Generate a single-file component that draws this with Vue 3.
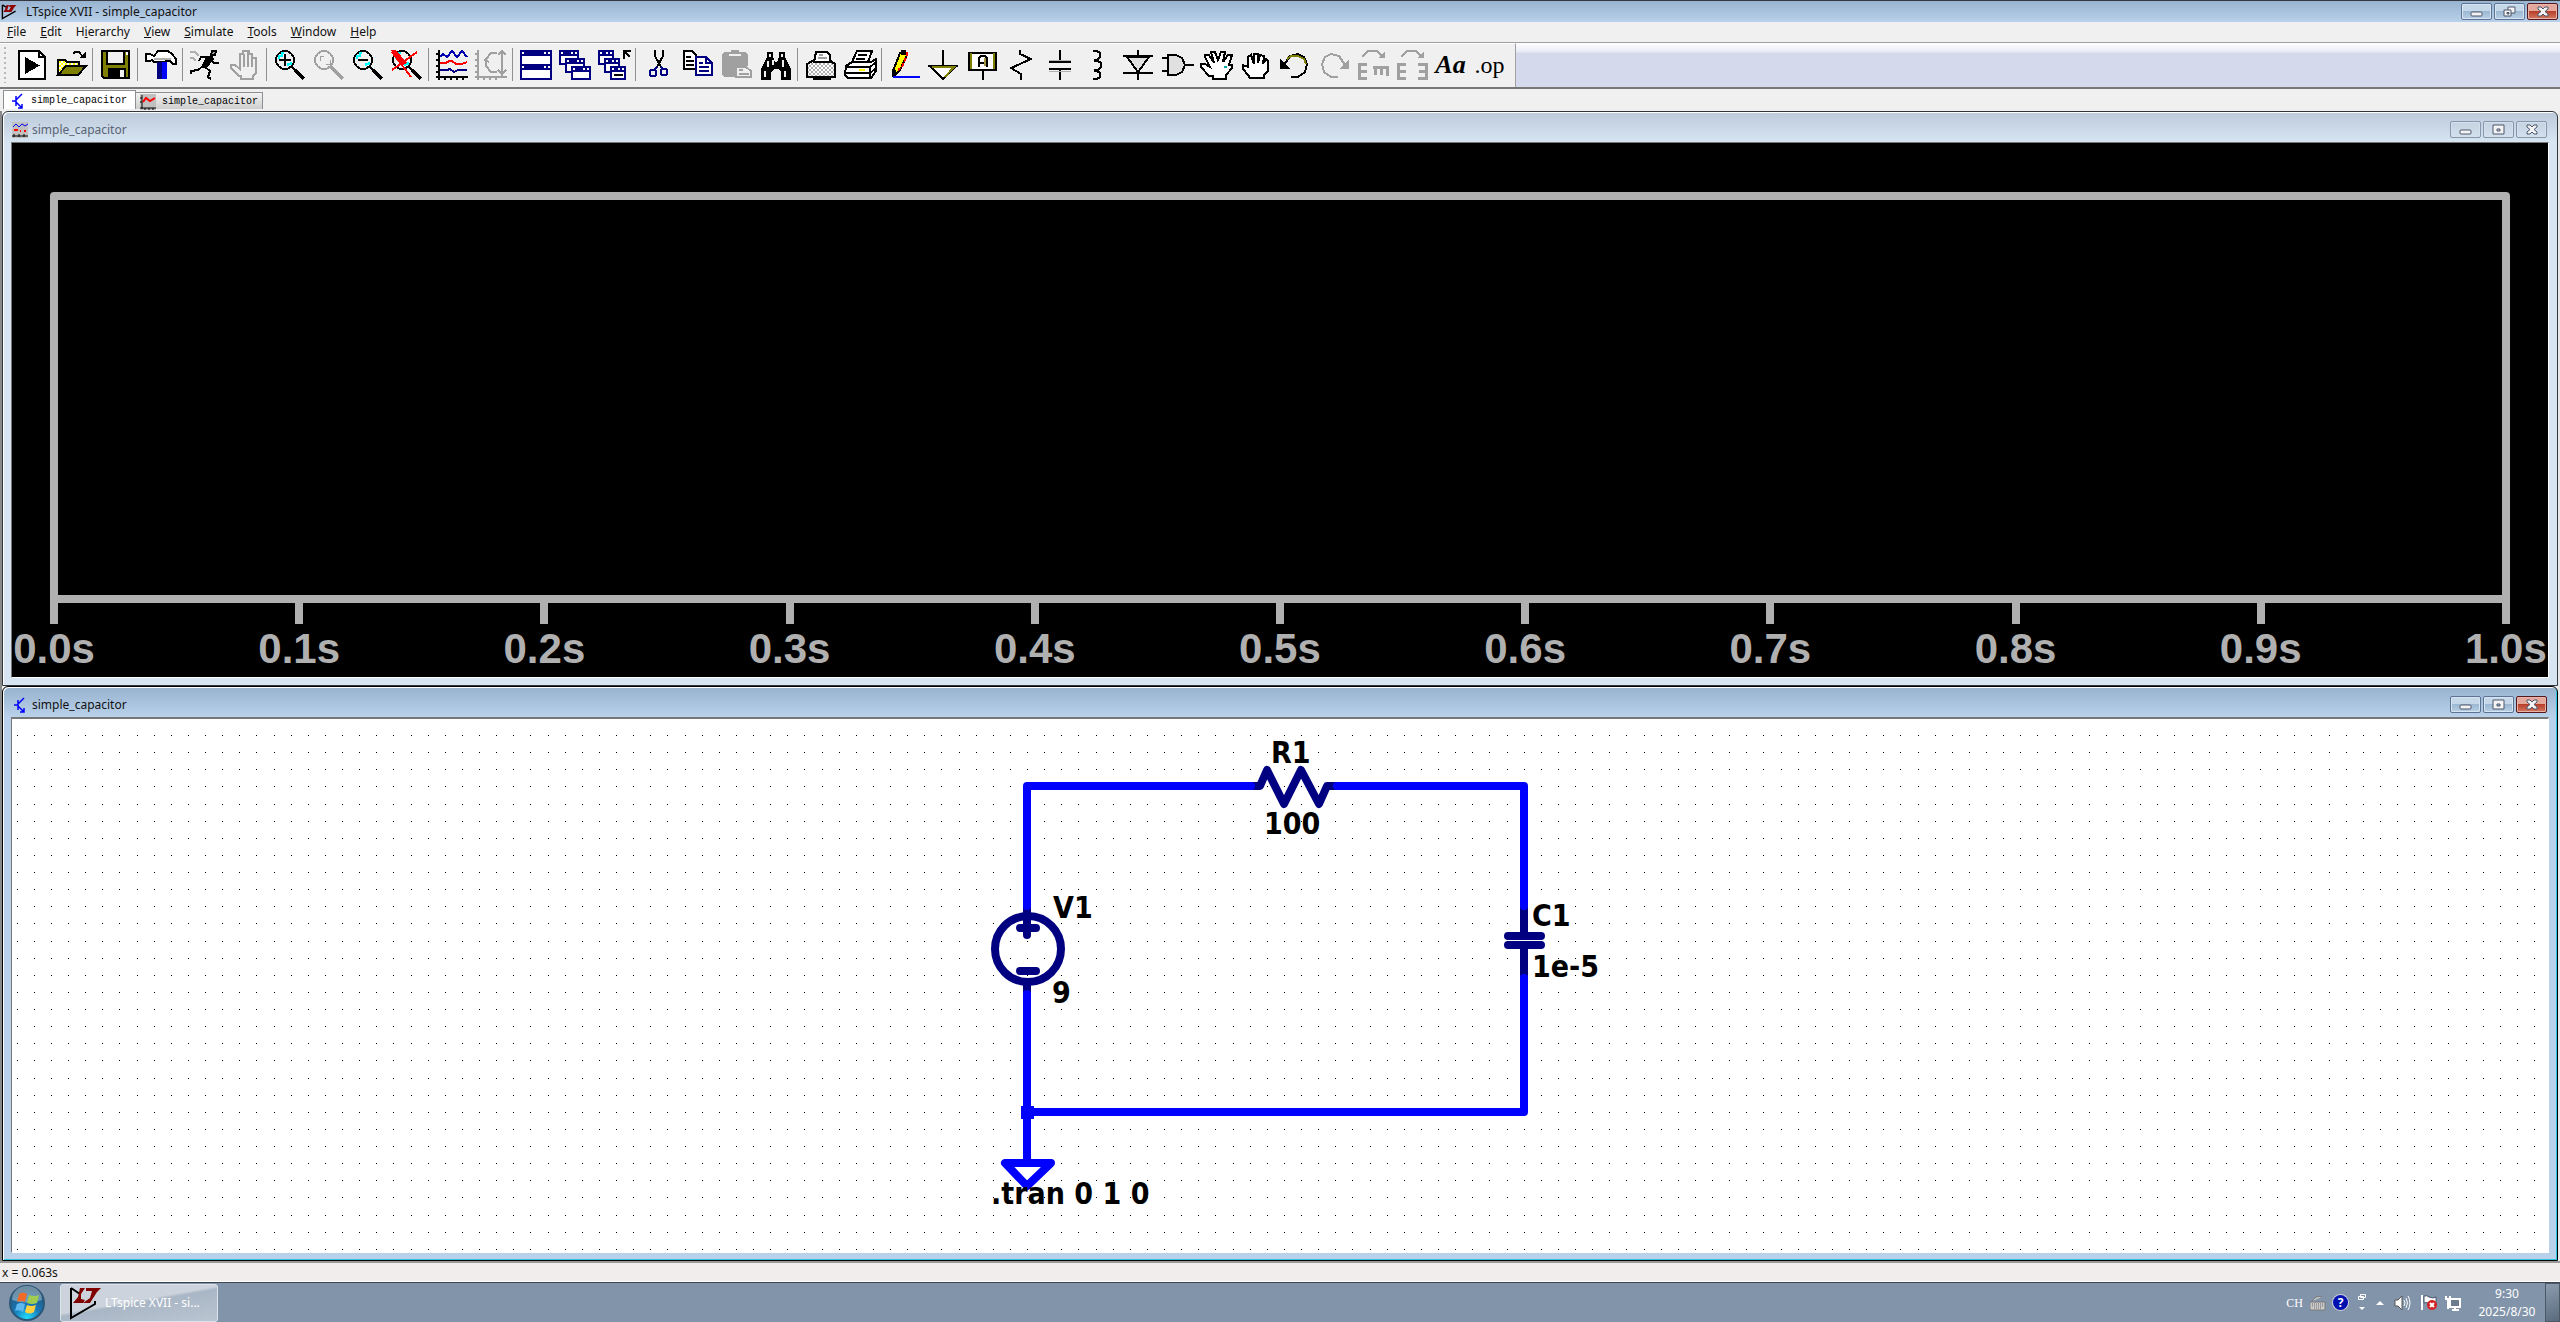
<script setup>
const menus = [
  ['', 'F', 'ile'], ['', 'E', 'dit'], ['H', 'i', 'erarchy'], ['', 'V', 'iew'],
  ['', 'S', 'imulate'], ['', 'T', 'ools'], ['', 'W', 'indow'], ['', 'H', 'elp'],
]

const lens = '<circle cx="11" cy="11" r="9" fill="#f0f0f0" stroke="#000" stroke-width="2"/><path d="M5 10V7H8V4H10M17 13V15H14V17" stroke="#0ff" stroke-width="2" fill="none"/><path d="M18 18L22 22" stroke="#000" stroke-width="2"/><path d="M21 21L30 30" stroke="#000" stroke-width="4"/>'
const win = (x, y, w, h) => `<path d="M${x} ${y}h${w}v${h}h-${w}z" fill="#000080"/><path d="M${x + 2} ${y + 6}h${w - 4}v${h - 8}h-${w - 4}z" fill="#fff"/><path d="M${x + 2} ${y + 2}h2v2h-2zM${x + w - 4} ${y + 2}h2v2h-2zM${x + w - 8} ${y + 2}h2v2h-2z" fill="#fff"/>`
const groups = [
  [
    { name: 'Run file', art: '<path d="M3 2H23L29 8V30H3Z" fill="#fff" stroke="#000" stroke-width="2"/><path d="M23 2V8H29" fill="none" stroke="#000" stroke-width="2"/><path d="M9 8L24 16.500L9 25Z" fill="#000"/>' },
    { name: 'Open', art: '<path d="M3 25V11H10L12 13H24V17" fill="url(#yellowDots)" stroke="#000" stroke-width="2"/><path d="M3 26L11 17H31L23 26Z" fill="#808000" stroke="#000" stroke-width="2"/><path d="M18 5L20 3H24L28 8" fill="none" stroke="#000" stroke-width="2"/><path d="M24 9H31V3Z" fill="#000"/>' },
  ],
  [{ name: 'Save', art: '<path d="M2 2H29V29H4L2 27Z" fill="#808000" stroke="#000" stroke-width="2"/><path d="M7 2H24V15H7Z" fill="#f0f0f0" stroke="#000" stroke-width="2"/><path d="M26 3h2v3h-2z" fill="#fff"/><path d="M8 19H26V29H8Z" fill="#000"/><path d="M20 21h4v7h-4z" fill="#f0f0f0"/>' }],
  [{ name: 'Control panel', art: '<path d="M1 5H5L9 7L13 2H23L27 5L31 10V15H28L25 12H21V13H9L7 11L5 12H1Z" fill="#fff" stroke="#000" stroke-width="2"/><path d="M9 10H26" stroke="#b0b0b0" stroke-width="2"/><path d="M12 13h5v17h-5z" fill="#000080"/><path d="M17 13h5v17h-5z" fill="#00f"/>' }],
  [
    { name: 'Run', art: '<path d="M22 2H26L25 6H21Z" fill="#aaa" stroke="#000" stroke-width="2"/><path d="M16 7H23L24 10L20 15L16 20L11 18L14 12Z"/><path d="M9 12L11 8H17M21 10L24 14H29M13 17L8 21L1 22V25M15 18L20 22L18 28L21 30" fill="none" stroke="#000" stroke-width="2"/><path d="M0 3H5L9 7M0 9H3L6 12" fill="none" stroke="#b0b0b0" stroke-width="2"/>' },
    { name: 'Halt', art: '<path d="M10 27L2 19V16H6L11 20V5H14V2H20V5H23V9H27V24L24 27V30H12V27Z" fill="#f0f0f0" stroke="#a0a0a0" stroke-width="2"/><path d="M15 5V18M19 3V18M23 6V18" stroke="#a0a0a0" stroke-width="2"/>' },
  ],
  [
    { name: 'Zoom in', art: lens + '<path d="M5 11H17M11 5V17" stroke="#000" stroke-width="2"/>' },
    { name: 'Pan', art: '<circle cx="11" cy="11" r="9" fill="none" stroke="#a0a0a0" stroke-width="2"/><path d="M7 12V7H11M17 11V15H13" stroke="#a0a0a0" fill="none"/><path d="M18 18L30 30" stroke="#a0a0a0" stroke-width="4"/>' },
    { name: 'Zoom out', art: lens + '<path d="M6 11H16" stroke="#000" stroke-width="2"/>' },
    { name: 'Zoom full', art: lens + '<path d="M1 3L20 28M26 3L1 21" stroke="#f00" stroke-width="2"/><path d="M0 1H5L16 14L12 16Z" fill="#f00"/>' },
  ],
  [
    { name: 'Autorange', art: '<path d="M3 1V31M0 28H32M0 5H3M0 11H3M0 17H3M0 23H3M9 28V31M15 28V31M21 28V31M27 28V31" stroke="#000" stroke-width="2" fill="none"/><path d="M4 8L7 5L11 8L16 2L21 8L26 2L31 8" fill="none" stroke="#0000b0" stroke-width="2"/><path d="M4 14H10L13 12H16L20 15H26L31 13" fill="none" stroke="#f00" stroke-width="2"/><path d="M4 21H11L14 20L18 23L22 21H31" fill="none" stroke="#000080" stroke-width="2"/>' },
    { name: 'Plot settings', art: '<path d="M3 1V31M0 28H32M0 5H3M0 11H3M0 17H3M0 23H3M9 28V31M15 28V31M21 28V31M27 2V27M23 6L27 2L31 6M23 21L27 25L31 21M22 4H16L11 10V17L16 23H22M9 11L14 13" stroke="#a0a0a0" stroke-width="2" fill="none"/>' },
  ],
  [
    { name: 'Tile windows', art: win(0, 1, 32, 16) + win(0, 15, 32, 16) },
    { name: 'Cascade windows', art: win(0, 1, 20, 15) + win(6, 9, 20, 15) + win(12, 17, 20, 14) },
    { name: 'Close windows', art: win(0, 1, 16, 15) + win(6, 9, 16, 15) + win(12, 17, 16, 14) + '<path d="M26 10V2H33M26 2L32 8M16 26H25" fill="none" stroke="#000" stroke-width="2"/>' },
  ],
  [
    { name: 'Cut', art: '<path d="M12 1V7L18 18M20 1V7L14 18" fill="none" stroke="#000" stroke-width="2"/><circle cx="10" cy="24" r="3.500" fill="none" stroke="#000080" stroke-width="2"/><circle cx="21" cy="23" r="3.500" fill="none" stroke="#000080" stroke-width="2"/><path d="M14 18L11 21M18 18L20 20" stroke="#000080" stroke-width="2"/>' },
    { name: 'Copy', art: '<path d="M2 2H10L14 6V20H2Z" fill="#fff" stroke="#000" stroke-width="2"/><path d="M4 8H9M4 12H12M4 16H12" stroke="#000" stroke-width="2"/><path d="M14 8H24L30 14V26H14Z" fill="#fff" stroke="#000080" stroke-width="2"/><path d="M24 8V14H30M17 14H21M17 18H27M17 22H27" fill="none" stroke="#000080" stroke-width="2"/>' },
    { name: 'Paste', art: '<path d="M1 5L3 3H10V1H18V3H24L27 5V17H14V28H3L1 26Z" fill="#a0a0a0"/><path d="M8 6H20" stroke="#f0f0f0" stroke-width="2"/><path d="M15 18H25L30 22V28H15Z" fill="#f0f0f0" stroke="#a0a0a0" stroke-width="2"/><path d="M18 21H22M18 25H28" stroke="#a0a0a0" stroke-width="2"/>' },
    { name: 'Find', art: '<path d="M7 3H13V8L15 13H17L19 8V3H25V8L31 20V31H21V23L18 20H14L11 23V31H1V20L7 8Z"/><path d="M9 5h2v3h-2zM21 5h2v3h-2zM7 12h2v6h-2zM12 11h2v5h-2zM22 11h2v7h-2zM4 22h2v6h-2zM24 22h2v6h-2z" fill="#f0f0f0"/>' },
  ],
  [
    { name: 'Print setup', art: '<path d="M2 15L9 11H24L30 15V28H2Z" fill="url(#grayDots)" stroke="#000" stroke-width="2"/><path d="M9 13L11 3H22L25 6V13Z" fill="#fff" stroke="#000" stroke-width="2"/><path d="M14 6H18M13 9H22" stroke="#a0a0a0" stroke-width="2"/><path d="M8 28h18v3h-18z"/>' },
    { name: 'Print', art: '<path d="M8 13L13 2H28L24 13Z" fill="#fff" stroke="#000" stroke-width="2"/><path d="M14 6H23M12 10H21" stroke="#000" stroke-width="2"/><path d="M2 17L8 13H27L32 10V22L27 29H4L1 26Z" fill="#fff" stroke="#000" stroke-width="2"/><path d="M2 18H26L31 14M2 24H26L31 20M26 18V28" stroke="#000" stroke-width="2" fill="none"/><path d="M15 20h6v2h-6z" fill="#ff0"/>' },
  ],
  [
    { name: 'Wire', art: '<path d="M4 22L11 4L16 2L18 6L11 21L5 27Z" fill="#ff0" stroke="#000" stroke-width="2"/><path d="M12 1h5v5h-5zM3 21h4v7h-4z"/><path d="M18 3V6L13 18L9 21" fill="none" stroke="#f00" stroke-width="2" stroke-dasharray="4 2"/><path d="M4 28H31" stroke="#00f" stroke-width="2"/>' },
    { name: 'Ground', art: '<path d="M15 1V17M0 17H30" stroke="#000" stroke-width="2"/><path d="M3 18L15 30L27 18Z" fill="#fff" stroke="#000" stroke-width="2"/><path d="M4 18H26L17 28" fill="none" stroke="#808000" stroke-width="2"/>' },
    { name: 'Label net', art: '<path d="M2 4H29V21H2Z" fill="#fff" stroke="#000" stroke-width="2"/><path d="M4 4V20M27 4V20" stroke="#808000" stroke-width="2"/><path d="M12 18V9L14 7H18L20 9V18M12 14H20M16 22V31" fill="none" stroke="#000" stroke-width="2"/><path d="M18 9V17" stroke="#a09840" stroke-width="2"/>' },
    { name: 'Resistor', art: '<path d="M14 1V5L25 10L5 19L15 25V31" fill="none" stroke="#000" stroke-width="2"/>' },
    { name: 'Capacitor', art: '<path d="M15 1V13M15 20V31M4 13H26M4 20H26" stroke="#000" stroke-width="2"/><path d="M4 11H26M4 22H26" stroke="#b0b0b0"/>' },
    { name: 'Inductor', art: '<path d="M9 2H13L16 4V8L13 11H10M10 12H14L17 14V18L14 21H10M10 22H13L16 24V28L13 30H9" fill="none" stroke="#000" stroke-width="2"/>' },
    { name: 'Diode', art: '<path d="M0 7H30M0 24H30M15 1V7M15 24V31" stroke="#000" stroke-width="2"/><path d="M4 8H26L15 23Z" fill="#e0e0e0" stroke="#000" stroke-width="2"/>' },
    { name: 'Component', art: '<path d="M6 6H14L20 9L23 16L20 23L14 26H6Z" fill="#e0e0e0" stroke="#000" stroke-width="2"/><path d="M0 9H6M0 22H6M23 16H32" stroke="#000" stroke-width="2"/>' },
    { name: 'Move', art: '<path d="M8 27L0 18V15H4L9 18L4 8V6H8L13 14L10 3H14L17 11L20 3H24L22 13L27 6H31L28 16H31V19L25 26V30H12V27Z" fill="#fff" stroke="#000" stroke-width="2"/><path d="M23 17h3v2h-3z" fill="#0aa"/>' },
    { name: 'Drag', art: '<path d="M8 26L3 20V16L8 18V8L11 6L14 15V5L18 5V14L20 6L24 7L23 15L26 10L28 12V22L24 26V29H10Z" fill="#fff" stroke="#000" stroke-width="2"/>' },
    { name: 'Undo', art: '<path d="M5 16L11 7L19 5L25 8L28 15L26 23L19 28H12" fill="none" stroke="#000" stroke-width="2"/><path d="M8 10L12 7H19L25 10L27 15" fill="none" stroke="#808000" stroke-width="2"/><path d="M1 10V20H11Z"/>' },
    { name: 'Redo', art: '<path d="M27 16L21 7L13 5L7 8L4 15L6 23L13 28H20" fill="none" stroke="#a0a0a0" stroke-width="2"/><path d="M31 10V20H21Z" fill="#a0a0a0"/>' },
    { name: 'Rotate', art: '<path d="M5 8L11 2H20L26 8" fill="none" stroke="#a0a0a0" stroke-width="2"/><path d="M28 2V9H21Z" fill="#a0a0a0"/><path d="M10 15H2V29H10M3 22H10M16 18H32M18 18V26M24 18V26M30 18V27" fill="none" stroke="#a0a0a0" stroke-width="3"/>' },
    { name: 'Mirror', art: '<path d="M5 8L11 2H20L26 8" fill="none" stroke="#a0a0a0" stroke-width="2"/><path d="M28 2V9H21Z" fill="#a0a0a0"/><path d="M10 15H2V29H10M3 22H10M22 15H30V29H22M23 22H30" fill="none" stroke="#a0a0a0" stroke-width="3"/>' },
    { name: 'Text', text: 'Aa', kind: 'script' },
    { name: 'SPICE directive', text: '.op', kind: 'serif' },
  ],
]

const ticks = ['0.0s', '0.1s', '0.2s', '0.3s', '0.4s', '0.5s', '0.6s', '0.7s', '0.8s', '0.9s', '1.0s']
const dotOffsets = [0, 17, 34, 51, 68, 85, 102, 119]

const glyphs = {
  Minimize: '<rect x="10" y="9" width="11" height="4" rx="1"/>',
  Maximize: '<path d="M10 4H21V13H10ZM14 8H17V10H14Z" fill-rule="evenodd"/>',
  Restore: '<path d="M14 4H21V10H14Z"/><path d="M10 7H17V13H10ZM13 9.500H15V11H13Z" fill-rule="evenodd"/>',
  Close: '<path d="M11 4H14L16 6L18 4H21V6L18 8.500L21 11V13H18L16 11L14 13H11V11L14 8.500L11 6Z"/>',
}
</script>

<template>
  <div class="desktop">
    <svg class="defs" aria-hidden="true">
      <defs>
        <pattern id="yellowDots" width="4" height="4" patternUnits="userSpaceOnUse">
          <path d="M0 0h4v4h-4z" fill="#fff" /><path d="M0 0h2v2h-2zM2 2h2v2h-2z" fill="#ff0" />
        </pattern>
        <pattern id="grayDots" width="4" height="4" patternUnits="userSpaceOnUse">
          <path d="M0 0h4v4h-4z" fill="#fff" /><path d="M0 0h2v2h-2zM2 2h2v2h-2z" fill="#b0b0b0" />
        </pattern>
      </defs>
    </svg>

    <header class="titlebar">
      <svg class="app-icon" width="16" height="16" viewBox="0 0 34 34" aria-hidden="true">
        <path d="M3 2V31L31 15M3 2L13 8" fill="none" stroke="#000" stroke-width="3" />
        <path d="M12 2H17L13 13H17L15 17H5L8 13ZM18 2H33L29 6L22 17H15L21 6H17Z" fill="#900000" />
      </svg>
      <h1>LTspice XVII - simple_capacitor</h1>
      <div class="controls">
        <button v-for="c in ['Minimize', 'Restore', 'Close']" :key="c" :aria-label="c" :class="{ close: c === 'Close' }">
          <svg viewBox="0 0 31 17" v-html="glyphs[c]"></svg>
        </button>
      </div>
    </header>

    <nav class="menubar">
      <button v-for="m in menus" :key="m.join('')">{{ m[0] }}<u>{{ m[1] }}</u>{{ m[2] }}</button>
    </nav>

    <div class="toolbar-row">
      <div class="toolbar" role="toolbar" aria-label="Main toolbar">
        <span class="grip"></span>
        <div v-for="(g, i) in groups" :key="i" class="group">
          <button v-for="t in g" :key="t.name" :aria-label="t.name">
            <span v-if="t.text" :class="t.kind">{{ t.text }}</span>
            <svg v-else viewBox="0 0 32 32" shape-rendering="crispEdges" v-html="t.art"></svg>
          </button>
        </div>
      </div>
    </div>

    <div class="tabs" role="tablist">
      <button class="tab active" role="tab" aria-selected="true">
        <svg viewBox="0 0 16 16" aria-hidden="true"><path d="M2 8H6M6 3V13M6 7L12 1M6 9L12 15M12 11V15H8" fill="none" stroke="#00f" stroke-width="1.500" /></svg>
        simple_capacitor
      </button>
      <button class="tab" role="tab" aria-selected="false">
        <svg viewBox="0 0 16 16" aria-hidden="true"><path d="M0 0H16V16H0Z" fill="#c0c0c0" /><path d="M2 1V15M0 14H16M0 4H2M0 8H2M5 14V16M9 14V16M13 14V16" stroke="#000" /><path d="M3 8L6 4L10 7L15 4" fill="none" stroke="#f00" stroke-width="2" /></svg>
        simple_capacitor
      </button>
    </div>

    <main class="mdi">
      <section class="child inactive">
        <header>
          <svg class="child-icon" viewBox="0 0 16 16" aria-hidden="true"><path d="M0 0H16V16H0Z" fill="#c0c0c0" /><path d="M1 5L4 2L7 5L10 2L13 4L16 2" fill="none" stroke="#00f" /><path d="M2 8H6M8 9H9M12 9H14" stroke="#f00" stroke-width="2" /><path d="M0 14H16M2 12V15M7 12V15M12 12V15" stroke="#000" /></svg>
          <h2>simple_capacitor</h2>
          <div class="controls">
            <button v-for="c in ['Minimize', 'Maximize', 'Close']" :key="c" :aria-label="c">
              <svg viewBox="0 0 31 17" v-html="glyphs[c]"></svg>
            </button>
          </div>
        </header>
        <div class="view plot">
          <div class="plot-frame"></div>
          <div class="axis">
            <span v-for="t in ticks" :key="t" class="tick"><b>{{ t }}</b></span>
          </div>
        </div>
      </section>

      <section class="child front">
        <header>
          <svg class="child-icon" viewBox="0 0 16 16" aria-hidden="true"><path d="M2 8H6M6 3V13M6 7L12 1M6 9L12 15M12 11V15H8" fill="none" stroke="#00f" stroke-width="1.500" /></svg>
          <h2>simple_capacitor</h2>
          <div class="controls">
            <button v-for="c in ['Minimize', 'Maximize', 'Close']" :key="c" :aria-label="c" :class="{ close: c === 'Close' }">
              <svg viewBox="0 0 31 17" v-html="glyphs[c]"></svg>
            </button>
          </div>
        </header>
        <div class="view sheet">
          <svg class="schematic" role="img" aria-label="RC circuit">
            <defs>
              <pattern id="grid" x="-12" y="85" width="137" height="137" patternUnits="userSpaceOnUse">
                <template v-for="y in dotOffsets" :key="y">
                  <rect v-for="x in dotOffsets" :key="x" :x="x" :y="y" width="1" height="1" fill="#000" />
                </template>
              </pattern>
            </defs>
            <rect width="100%" height="100%" fill="url(#grid)" />
            <svg x="50%" overflow="visible">
              <g class="symbol">
                <path d="M-27 67H-20L-13 51L4 85L21 51L39 85L47 67H55" />
                <circle cx="-252" cy="230" r="33" />
                <path d="M-253 189V216M-260 209H-244M-260 252H-244M-253 263V273" />
                <path d="M244 189V217M228 217H261M228 226H261M244 226V257" />
              </g>
              <g class="wire">
                <path d="M-253 187V67H-29" /><path d="M57 67H244V187" />
                <path d="M244 259V393H-253" /><path d="M-253 275V442" />
                <path d="M-275 444H-229L-253 467Z" />
              </g>
              <rect x="-259" y="387" width="13" height="13" fill="#00f" />
              <g class="note">
                <text x="-9" y="44">R1</text>
                <text x="-16" y="115">100</text>
                <text x="-227" y="199">V1</text>
                <text x="-228" y="284">9</text>
                <text x="252" y="207">C1</text>
                <text x="252" y="258">1e-5</text>
                <text x="-289" y="485">.tran 0 1 0</text>
              </g>
            </svg>
          </svg>
        </div>
      </section>
    </main>

    <div class="status">x = 0.063s</div>

    <footer class="taskbar">
      <button class="start" aria-label="Start">
        <svg viewBox="0 0 36 36">
          <defs>
            <radialGradient id="orb" cx="50%" cy="95%" r="90%">
              <stop offset="0" stop-color="#20e0ff" /><stop offset=".45" stop-color="#1878b8" /><stop offset="1" stop-color="#24506e" />
            </radialGradient>
          </defs>
          <circle cx="18" cy="18" r="17" fill="url(#orb)" stroke="#2c5878" stroke-width="2" />
          <path d="M3 15A15 14 0 0 1 33 15Q18 20 3 15Z" fill="#fff" opacity=".35" />
          <path d="M10 9Q14 6 18 9L16 17Q12 15 8 17Z" fill="#f06a28" />
          <path d="M20 10Q25 12 30 10L28 18Q23 20 18 18Z" fill="#a0cc50" />
          <path d="M8 19Q12 17 16 19L14 27Q10 24 6 26Z" fill="#60b8f0" />
          <path d="M18 20Q22 22 27 20L25 27Q20 30 16 27Z" fill="#ffd040" />
        </svg>
      </button>
      <button class="task">
        <svg width="34" height="34" viewBox="0 0 34 34" aria-hidden="true">
          <path d="M3 2V32L27 18V15M3 2L12 8" fill="none" stroke="#000" stroke-width="2" />
          <path d="M12 2H17L13 8V13L17 14L15 17H5L10 11ZM18 2H33L29 6L22 17H15L22 12L24 5H18Z" fill="#800000" />
        </svg>
        <span>LTspice XVII - si...</span>
      </button>
      <div class="tray">
        <span class="lang">CH</span>
        <svg width="16" height="16" viewBox="0 0 16 16" aria-hidden="true"><path d="M0 7H15V15H0ZM2 6Q6 0 12 2" fill="#ccc" stroke="#777" /><path d="M2 9H14M2 11H14M4 13H11" stroke="#666" stroke-dasharray="1 1" /></svg>
        <button class="help" aria-label="Help">?</button>
        <svg class="spaced" width="8" height="20" viewBox="0 0 8 20" aria-hidden="true"><path d="M2.500 1.500H7.500V4.500H2.500ZM.5 3.500H5.500V6.500H.5Z" fill="#8294aa" stroke="#fff" /><path d="M1 14H7L4 17Z" fill="#fff" /></svg>
        <svg width="8" height="6" viewBox="0 0 8 6" aria-hidden="true"><path d="M0 5L4 1L8 5Z" fill="#fff" /></svg>
        <svg class="spaced" width="17" height="16" viewBox="0 0 17 16" aria-hidden="true"><path d="M1 5H4L8 1V15L4 11H1Z" fill="#fff" stroke="#555" /><path d="M10 5Q12 8 10 11M12 3Q15 8 12 13M14 1Q18 8 14 15" fill="none" stroke="#fff" /></svg>
        <svg width="17" height="17" viewBox="0 0 17 17" aria-hidden="true"><path d="M1 1V16" stroke="#fff" stroke-width="2" /><path d="M3 2Q6 1 8 3Q12 5 15 3V10Q11 11 8 9Q5 8 3 9Z" fill="#fff" stroke="#4c566c" /><circle cx="11" cy="11" r="5" fill="#d42020" /><path d="M9 9L13 13M13 9L9 13" stroke="#fff" stroke-width="2" /></svg>
        <svg width="17" height="16" viewBox="0 0 17 16" aria-hidden="true"><path d="M5 4H15V12H5ZM7 15H14M10 12V15" fill="#6c7c8e" stroke="#fff" stroke-width="2" /><path d="M1 1V4H5V1M3 4V14" fill="none" stroke="#fff" stroke-width="2" /></svg>
        <time>9:30<br />2025/8/30</time>
      </div>
      <button class="show-desktop" aria-label="Show desktop"></button>
    </footer>
  </div>
</template>

<style>
body { margin: 0; }
</style>

<style scoped>
* { box-sizing: border-box; }
.desktop {
  display: flex;
  flex-direction: column;
  min-height: 100vh;
  background: #f0f0f0;
  color: #111;
  font: 12px/16px "Noto Sans", "Open Sans", sans-serif;
}
.defs { position: absolute; width: 0; height: 0; }
button { margin: 0; padding: 0; border: 0; background: none; color: inherit; font: inherit; }
h1, h2 { flex: 1; margin: 0; font-size: 12px; font-weight: 400; }

.titlebar {
  display: flex;
  align-items: center;
  height: 22px;
  padding: 0 2px 0 1px;
  border-top: 1px solid #35393f;
  background: linear-gradient(#98b3d0, #b9d1ea);
}
.titlebar h1 { padding-left: 9px; }
.controls { display: flex; gap: 2px; }
.controls button {
  width: 31px;
  height: 17px;
  border: 1px solid #5c7394;
  border-radius: 2px;
  background: linear-gradient(#c5d8ea 45%, #9db8d2 50%, #b7d0e6);
  box-shadow: inset 0 0 0 1px #d7e5f3;
}
.controls svg { display: block; width: 31px; height: 17px; margin: -1px; fill: #f4f4f4; stroke: #4c566c; stroke-width: 1px; }
.controls .close {
  border-color: #55181c;
  background: linear-gradient(#e4a79c 45%, #b8402a 50%, #d27860);
  box-shadow: inset 0 0 0 1px #e8b4aa;
}

.menubar { display: flex; height: 20px; }
.menubar button { padding: 0 7px; line-height: 20px; }

.toolbar-row {
  height: 47px;
  border-top: 1px solid #a0a0a0;
  border-bottom: 2px solid #777;
  background: linear-gradient(#fff, #e8ebf6 9px, #d4d9ec 10px);
}
.toolbar {
  display: flex;
  align-items: center;
  width: max-content;
  height: 44px;
  padding: 0 6px 2px 4px;
  border-top: 1px solid #fff;
  border-right: 1px solid #a0a0a0;
  background: #f0f0f0;
}
.grip { width: 2px; height: 36px; margin-right: 6px; background: repeating-linear-gradient(#b8b8b8 0 2px, transparent 2px 5px); }
.group { display: flex; align-items: center; }
.group + .group::before { content: ""; width: 1px; height: 33px; margin: 0 3px 0 2px; background: #909090; }
.group button { width: 39px; height: 32px; }
.group svg { display: block; width: 32px; height: 32px; margin: 0 auto; overflow: visible; }
.script { font: italic bold 26px/32px "Liberation Serif", serif; color: #000; }
.serif { font: 24px/28px "Liberation Serif", serif; color: #000; }

.tabs { display: flex; align-items: flex-end; height: 22px; padding: 0 3px 2px; }
.tab {
  display: flex;
  align-items: center;
  gap: 6px;
  height: 17px;
  padding: 1px 4px 0;
  border: 1px solid #8c8e94;
  border-left: 0;
  border-bottom: 0;
  background: linear-gradient(#f2f2f2, #cfcfcf);
  color: #000;
  font: 10px/16px "Liberation Mono", monospace;
}
.tab.active { height: 19px; padding: 1px 8px 0 6px; gap: 5px; border-left: 1px solid #8c8e94; background: #fff; }
.tab svg { width: 16px; height: 16px; }

.mdi {
  flex: 1;
  display: flex;
  flex-direction: column;
  border: solid #8a8a8a;
  border-width: 0 2px;
  border-right-color: #e8e8e8;
}
.child {
  flex: 1 1 0;
  display: flex;
  flex-direction: column;
  min-height: 320px;
  padding: 0 8px 7px;
  border: 1px solid #33373c;
  border-radius: 6px 6px 0 0;
  box-shadow: inset 1px 1px #fff;
}
.child header { display: flex; align-items: center; height: 30px; padding: 5px 2px 0 1px; }
.child-icon { width: 16px; height: 16px; }
.child h2 { padding-left: 4px; }
.inactive { background: linear-gradient(#bccad9, #d7e4f2 30px); }
.inactive h2 { color: #596474; }
.inactive .controls button { border-color: #8596ad; background: none; box-shadow: inset 0 0 0 1px #d5e0ec; }
.front { border: 1px solid #000; background: linear-gradient(#97b2cf, #b9d1ea 30px); box-shadow: inset 1px 1px #fff, inset -1px -1px #28c8e0; }
.view { flex: 1; display: flex; flex-direction: column; border: 1px solid #777; border-right-color: #fff; border-bottom-color: #fff; }

.plot { padding: 49px 38px 0; background: #000; }
.plot-frame { flex: 1; border: 8px solid #b0b0b0; border-radius: 4px 4px 0 0; }
.axis { display: flex; justify-content: space-between; height: 74px; }
.tick { display: flex; flex-direction: column; align-items: center; width: 8px; }
.tick::before { content: ""; flex: none; width: 8px; height: 21px; background: #b0b0b0; }
.tick b { color: #b0b0b0; font: bold 42px/50px "Liberation Sans", sans-serif; white-space: nowrap; }

.sheet { border-top-width: 2px; background: #fff; }
.schematic { flex: 1; display: block; width: 100%; }
.wire, .symbol { fill: none; stroke: #00f; stroke-width: 8px; stroke-linecap: round; stroke-linejoin: round; }
.symbol { stroke: #000080; }
.note { font: bold 30px "DejaVu Sans Condensed", "DejaVu Sans", sans-serif; fill: #000; }

.status { height: 21px; padding: 0 2px; border-top: 2px solid #999; border-bottom: 1px solid #fff; background: #f0edec; line-height: 20px; }

.taskbar { display: flex; align-items: center; height: 40px; border-top: 1px solid #3d4650; background: #8294aa; color: #fff; }
.start { width: 36px; height: 36px; margin: 0 15px 0 9px; }
.start svg { display: block; }
.task {
  display: flex;
  align-items: center;
  gap: 3px;
  width: 158px;
  height: 38px;
  padding-left: 7px;
  border: 1px solid #dde3ea;
  border-radius: 3px;
  background: linear-gradient(170deg, #ccd3dc 45%, #a9b6c5 50%, #bac5d1);
  white-space: nowrap;
}
.tray { display: flex; align-items: center; gap: 7px; margin-left: auto; }
.tray .spaced { margin: 0 3px; }
.lang { font: 12px/16px "Liberation Serif", serif; }
.help { width: 15px; height: 15px; border-radius: 50%; background: #0010b0; box-shadow: 0 0 0 1px #ccd; color: #fff; font-weight: 700; line-height: 14px; }
.tray time { width: 76px; text-align: center; line-height: 18px; }
.show-desktop { width: 15px; height: 39px; border: 1px solid #4c5866; background: linear-gradient(160deg, #8c9cae, #5b6b7e); }
</style>
